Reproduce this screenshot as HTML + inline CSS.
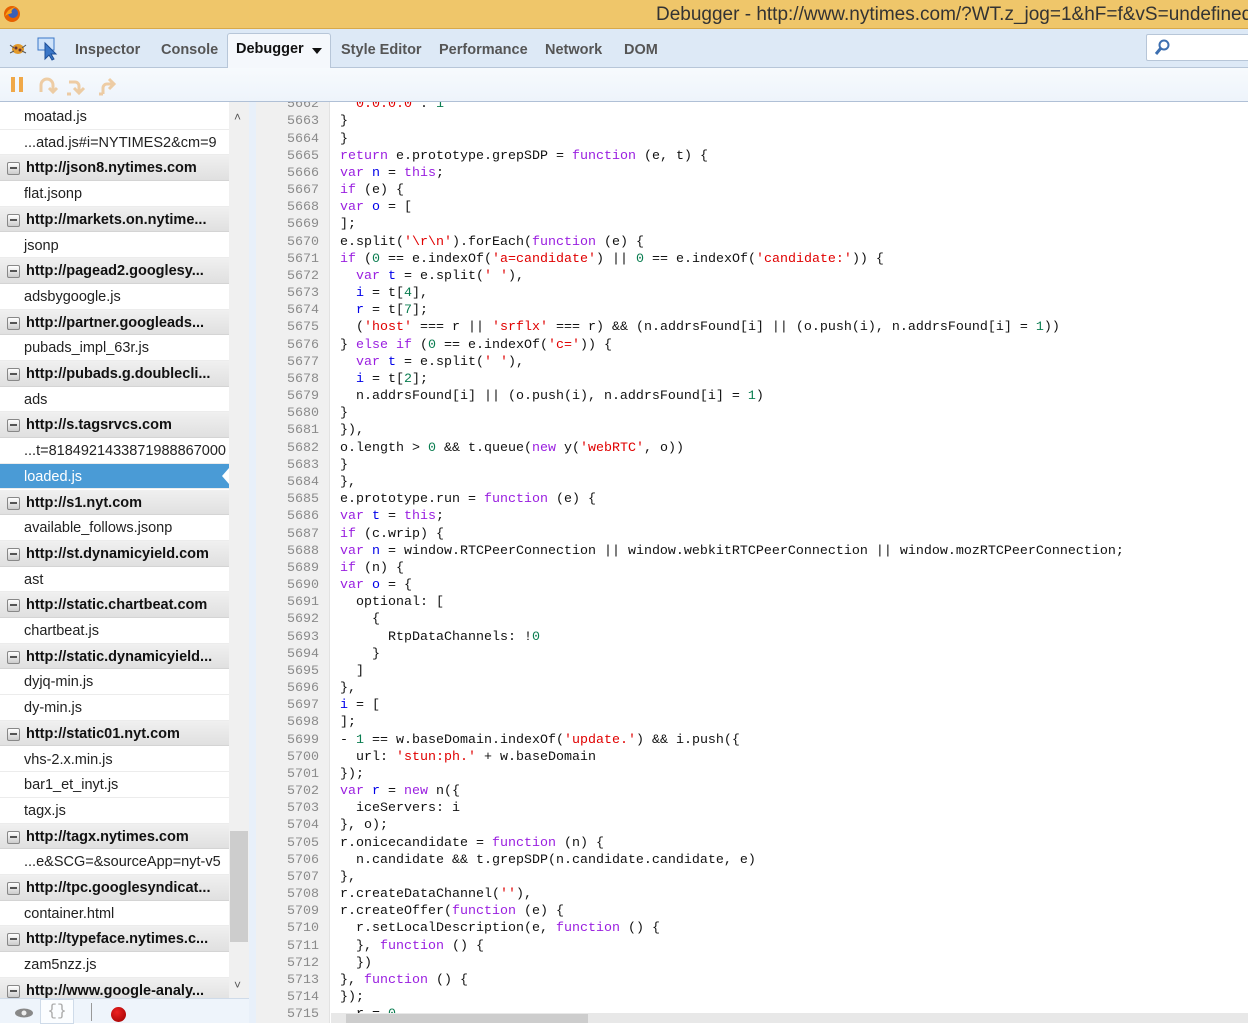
<!DOCTYPE html>
<html><head><meta charset="utf-8"><style>
*{margin:0;padding:0;box-sizing:border-box}
body{width:1248px;height:1023px;overflow:hidden;background:#fff;font-family:"Liberation Sans",sans-serif;position:relative}
#title{position:absolute;left:0;top:0;width:1248px;height:29px;background:#efc66a;border-bottom:1px solid #d8a94a}
#title .t{position:absolute;left:656px;top:4px;font-size:19px;color:#333;white-space:nowrap}
#tabs{position:absolute;left:0;top:29px;width:1248px;height:39px;background:#dde9f6;border-bottom:1px solid #b7c6d8}
.tab{position:absolute;top:13px;font-size:14.5px;font-weight:bold;color:#555;white-space:nowrap}
#act{position:absolute;left:227px;top:4px;width:104px;height:36px;background:#f5f8fc;border:1px solid #b7c6d8;border-bottom:none;border-radius:3px 3px 0 0}
#search{position:absolute;left:1146px;top:5px;width:110px;height:27px;background:#fff;border:1px solid #b7c6d8;border-radius:2px}
#tool{position:absolute;left:0;top:68px;width:1248px;height:34px;background:linear-gradient(#f7fafd,#eef4fb);border-bottom:1px solid #b0c0d6}
#side{position:absolute;left:0;top:102px;width:229px;height:896px;overflow:hidden;background:#fff}
.r{position:absolute;left:0;width:229px;height:25.7px;font-size:14.5px;line-height:27px;white-space:nowrap;overflow:hidden;color:#222}
.f{padding-left:24px;border-bottom:1px solid #ececec}
.h{background:linear-gradient(#f0f0f0,#e0e0e0);border-bottom:1px solid #d4d4d4;font-weight:bold;color:#111;padding-left:26px}
.h:before{content:"";position:absolute;left:7px;top:7px;width:11px;height:11px;border:1px solid #888;border-radius:2px;background:linear-gradient(#fff,#ccc)}
.h:after{content:"";position:absolute;left:10px;top:12px;width:7px;height:2px;background:#555}
.sel{background:#4a9bd6;color:#fff}
#sb{position:absolute;left:229px;top:102px;width:20px;height:896px;background:#f0f0f0}
#split{position:absolute;left:249px;top:102px;width:7px;height:921px;background:#e8f0fa}
#gut{position:absolute;left:256px;top:102px;width:74px;height:921px;background:#f0f0f0;border-right:1px solid #e2e2e2;overflow:hidden}
#code{position:absolute;left:331px;top:102px;width:917px;height:911px;overflow:hidden;background:#fff}
.ln,.cl{position:absolute;font-family:"Liberation Mono",monospace;font-size:13.33px;line-height:17.17px;white-space:pre}
.ln{right:10px;color:#8a8a8a;text-align:right}
.cl{left:9px;color:#111}
.k{color:#9a1fe0}.s{color:#e00000}.v{color:#0000e8}.n{color:#0a7d50}
#bot{position:absolute;left:0;top:998px;width:249px;height:25px;background:#eef4fb;border-top:1px solid #cfdbe9}
#hs{position:absolute;left:331px;top:1013px;width:917px;height:10px;background:#e8e8e8}
</style></head><body>
<div id="title">
<svg style="position:absolute;left:2px;top:4px" width="20" height="20" viewBox="0 0 20 20"><circle cx="10" cy="10" r="8" fill="#e66000"/><circle cx="11" cy="9" r="5" fill="#3a5fb8"/><path d="M3 12 Q6 4 14 3 Q8 6 10 9 Q6 10 3 12Z" fill="#f7a21b"/></svg>
<div class="t">Debugger - http://www.nytimes.com/?WT.z_jog=1&amp;hF=f&amp;vS=undefined</div></div>
<div id="tabs">
<div id="act"></div>
<svg style="position:absolute;left:8px;top:11px" width="20" height="16"><ellipse cx="10" cy="9" rx="6" ry="5" fill="#e39a2a"/><circle cx="8" cy="8" r="1.5" fill="#633"/><circle cx="12" cy="10" r="1.5" fill="#633"/><path d="M2 5l4 3M18 5l-4 3M2 13l4-2M18 13l-4-2" stroke="#555"/></svg>
<svg style="position:absolute;left:37px;top:8px" width="22" height="24"><rect x="1" y="1" width="16" height="12" fill="#cfe3fa" stroke="#3a77c8"/><path d="M8 6 L8 22 L12 18 L15 23 L17 22 L14 17 L19 17Z" fill="#3a77c8" stroke="#1d4f99"/></svg>
<div class="tab" style="left:75px">Inspector</div>
<div class="tab" style="left:161px">Console</div>
<div class="tab" style="left:236px;color:#111;top:12px">Debugger</div>
<div style="position:absolute;left:312px;top:19px;border:5px solid transparent;border-top:6px solid #111"></div>
<div class="tab" style="left:341px">Style Editor</div>
<div class="tab" style="left:439px">Performance</div>
<div class="tab" style="left:545px">Network</div>
<div class="tab" style="left:624px">DOM</div>
<div id="search"><svg style="position:absolute;left:7px;top:4px" width="16" height="17"><circle cx="10" cy="6" r="4.5" fill="none" stroke="#3d6fb0" stroke-width="2"/><path d="M7 9 L2 15" stroke="#3d6fb0" stroke-width="3"/></svg></div>
</div>
<div id="tool">
<div style="position:absolute;left:11px;top:9px;width:4px;height:15px;background:#f0a848"></div>
<div style="position:absolute;left:19px;top:9px;width:4px;height:15px;background:#f0a848"></div>
<svg style="position:absolute;left:37px;top:8px;opacity:.45" width="80" height="20"><path d="M4 16 V9 a6 6 0 0 1 12 0 v5 M12 12 l4 4 4-4" fill="none" stroke="#e89a3a" stroke-width="3"/><path d="M32 6 h6 a4 4 0 0 1 4 4 v6 M37 12 l5 5 5-5 M30 18 h4" fill="none" stroke="#e89a3a" stroke-width="3"/><path d="M66 18 v-6 a4 4 0 0 1 4 -4 h6 M72 3 l5 5 -5 5 M62 18 h4" fill="none" stroke="#e89a3a" stroke-width="3"/></svg>
</div>
<div id="side">
<div class="r f" style="top:2px">moatad.js</div>
<div class="r f" style="top:27.7px">...atad.js#i=NYTIMES2&amp;cm=9</div>
<div class="r h" style="top:53.4px">http://json8.nytimes.com</div>
<div class="r f" style="top:79.1px">flat.jsonp</div>
<div class="r h" style="top:104.8px">http://markets.on.nytime...</div>
<div class="r f" style="top:130.5px">jsonp</div>
<div class="r h" style="top:156.2px">http://pagead2.googlesy...</div>
<div class="r f" style="top:181.9px">adsbygoogle.js</div>
<div class="r h" style="top:207.6px">http://partner.googleads...</div>
<div class="r f" style="top:233.3px">pubads_impl_63r.js</div>
<div class="r h" style="top:259px">http://pubads.g.doublecli...</div>
<div class="r f" style="top:284.7px">ads</div>
<div class="r h" style="top:310.4px">http://s.tagsrvcs.com</div>
<div class="r f" style="top:336.1px">...t=8184921433871988867000</div>
<div class="r f sel" style="top:361.8px">loaded.js</div>
<div class="r h" style="top:387.5px">http://s1.nyt.com</div>
<div class="r f" style="top:413.2px">available_follows.jsonp</div>
<div class="r h" style="top:438.9px">http://st.dynamicyield.com</div>
<div class="r f" style="top:464.6px">ast</div>
<div class="r h" style="top:490.3px">http://static.chartbeat.com</div>
<div class="r f" style="top:516px">chartbeat.js</div>
<div class="r h" style="top:541.7px">http://static.dynamicyield...</div>
<div class="r f" style="top:567.4px">dyjq-min.js</div>
<div class="r f" style="top:593.1px">dy-min.js</div>
<div class="r h" style="top:618.8px">http://static01.nyt.com</div>
<div class="r f" style="top:644.5px">vhs-2.x.min.js</div>
<div class="r f" style="top:670.2px">bar1_et_inyt.js</div>
<div class="r f" style="top:695.9px">tagx.js</div>
<div class="r h" style="top:721.6px">http://tagx.nytimes.com</div>
<div class="r f" style="top:747.3px">...e&amp;SCG=&amp;sourceApp=nyt-v5</div>
<div class="r h" style="top:773px">http://tpc.googlesyndicat...</div>
<div class="r f" style="top:798.7px">container.html</div>
<div class="r h" style="top:824.4px">http://typeface.nytimes.c...</div>
<div class="r f" style="top:850.1px">zam5nzz.js</div>
<div class="r h" style="top:875.8px">http://www.google-analy...</div>
</div>
<div style="position:absolute;left:222px;top:468px;border:8px solid transparent;border-right:7px solid #fff;border-left:none"></div>
<div id="sb"><div style="position:absolute;left:1px;top:729px;width:18px;height:111px;background:#cdcdcd"></div>
<div style="position:absolute;left:5px;top:8px;font-size:12px;color:#555">&#x2C4;</div>
<div style="position:absolute;left:5px;top:876px;font-size:12px;color:#555">&#x2C5;</div></div>
<div id="split"></div>
<div id="bot">
<svg style="position:absolute;left:14px;top:8px" width="20" height="12"><ellipse cx="10" cy="6" rx="9" ry="4.5" fill="#888"/><circle cx="10" cy="6" r="2.5" fill="#eee"/></svg>
<div style="position:absolute;left:40px;top:0;width:34px;height:25px;background:#fbfdff;border:1px solid #cfdbe9;font-family:'Liberation Mono',monospace;font-size:16px;color:#aaa;text-align:center;line-height:22px">{}</div>
<div style="position:absolute;left:91px;top:4px;width:1px;height:18px;background:#999"></div>
<div style="position:absolute;left:111px;top:8px;width:15px;height:15px;border-radius:50%;background:radial-gradient(circle at 40% 35%,#e22,#900)"></div>
</div>
<div id="gut"><div class="ln" style="top:-5.8px">5662
5663
5664
5665
5666
5667
5668
5669
5670
5671
5672
5673
5674
5675
5676
5677
5678
5679
5680
5681
5682
5683
5684
5685
5686
5687
5688
5689
5690
5691
5692
5693
5694
5695
5696
5697
5698
5699
5700
5701
5702
5703
5704
5705
5706
5707
5708
5709
5710
5711
5712
5713
5714
5715</div></div>
<div id="code"><div class="cl" style="top:-5.8px"> <span class="s">'0.0.0.0'</span>: <span class="n">1</span>
}
}
<span class="k">return</span> e.prototype.grepSDP = <span class="k">function</span> (e, t) {
<span class="k">var</span> <span class="v">n</span> = <span class="k">this</span>;
<span class="k">if</span> (e) {
<span class="k">var</span> <span class="v">o</span> = [
];
e.split(<span class="s">'\r\n'</span>).forEach(<span class="k">function</span> (e) {
<span class="k">if</span> (<span class="n">0</span> == e.indexOf(<span class="s">'a=candidate'</span>) || <span class="n">0</span> == e.indexOf(<span class="s">'candidate:'</span>)) {
  <span class="k">var</span> <span class="v">t</span> = e.split(<span class="s">' '</span>),
  <span class="v">i</span> = t[<span class="n">4</span>],
  <span class="v">r</span> = t[<span class="n">7</span>];
  (<span class="s">'host'</span> === r || <span class="s">'srflx'</span> === r) &amp;&amp; (n.addrsFound[i] || (o.push(i), n.addrsFound[i] = <span class="n">1</span>))
} <span class="k">else if</span> (<span class="n">0</span> == e.indexOf(<span class="s">'c='</span>)) {
  <span class="k">var</span> <span class="v">t</span> = e.split(<span class="s">' '</span>),
  <span class="v">i</span> = t[<span class="n">2</span>];
  n.addrsFound[i] || (o.push(i), n.addrsFound[i] = <span class="n">1</span>)
}
}),
o.length &gt; <span class="n">0</span> &amp;&amp; t.queue(<span class="k">new</span> y(<span class="s">'webRTC'</span>, o))
}
},
e.prototype.run = <span class="k">function</span> (e) {
<span class="k">var</span> <span class="v">t</span> = <span class="k">this</span>;
<span class="k">if</span> (c.wrip) {
<span class="k">var</span> <span class="v">n</span> = window.RTCPeerConnection || window.webkitRTCPeerConnection || window.mozRTCPeerConnection;
<span class="k">if</span> (n) {
<span class="k">var</span> <span class="v">o</span> = {
  optional: [
    {
      RtpDataChannels: !<span class="n">0</span>
    }
  ]
},
<span class="v">i</span> = [
];
- <span class="n">1</span> == w.baseDomain.indexOf(<span class="s">'update.'</span>) &amp;&amp; i.push({
  url: <span class="s">'stun:ph.'</span> + w.baseDomain
});
<span class="k">var</span> <span class="v">r</span> = <span class="k">new</span> n({
  iceServers: i
}, o);
r.onicecandidate = <span class="k">function</span> (n) {
  n.candidate &amp;&amp; t.grepSDP(n.candidate.candidate, e)
},
r.createDataChannel(<span class="s">''</span>),
r.createOffer(<span class="k">function</span> (e) {
  r.setLocalDescription(e, <span class="k">function</span> () {
  }, <span class="k">function</span> () {
  })
}, <span class="k">function</span> () {
});
  r = <span class="n">0</span></div></div>
<div id="hs"><div style="position:absolute;left:15px;top:1px;width:242px;height:9px;background:#cdcdcd"></div></div>
</body></html>
